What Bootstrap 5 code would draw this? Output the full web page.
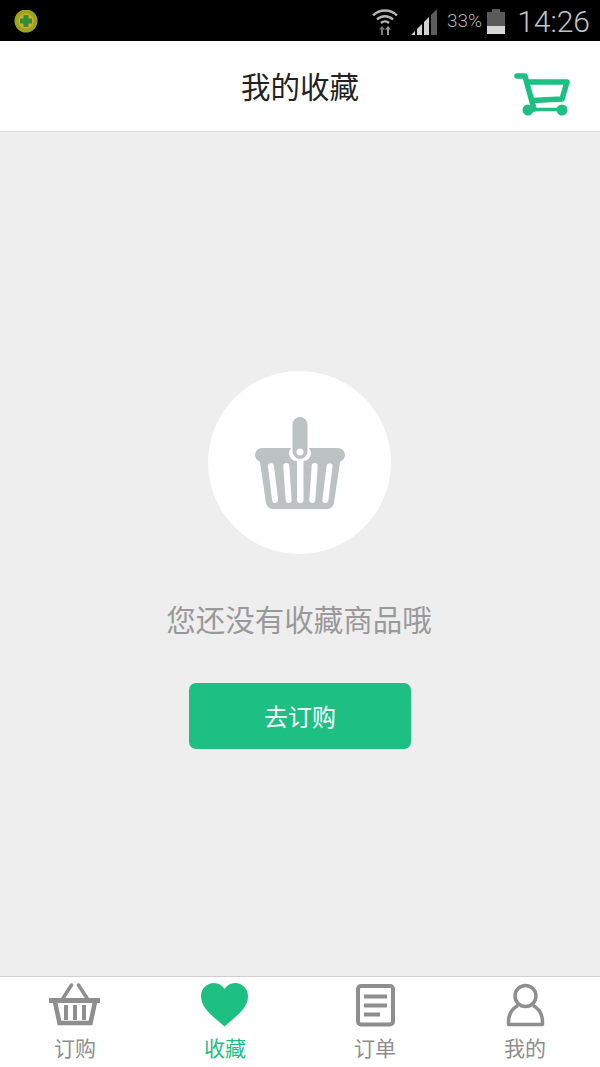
<!DOCTYPE html>
<html lang="zh-CN">
<head>
    <meta charset="UTF-8">
    <title>我的收藏</title>
    <meta name="viewport" content="width=device-width, initial-scale=1">
    <link href="https://cdn.jsdelivr.net/npm/bootstrap@5.3.0/dist/css/bootstrap.min.css" rel="stylesheet">
    <style>
        html, body {
            height: 100%;
        }
        body {
            font-family: "Noto Sans CJK SC", "Liberation Sans", sans-serif;
            background-color: #eeeeee;
        }
        .app-shell {
            height: 1067px;
        }
        /* Status bar */
        .status-strip {
            height: 41px;
            background-color: #000;
            color: #b5b5b5;
            font-family: Roboto, "Liberation Sans", sans-serif;
            padding: 2px 10px 0 14px;
        }
        .status-wifi {
            margin-right: 10px;
        }
        .status-percent {
            font-size: 19px;
            font-weight: 300;
            margin: 0 5px 0 0;
        }
        .status-clock {
            font-size: 30px;
            font-weight: 300;
            line-height: 1;
            margin-left: 12px;
            color: #c4c4c4;
        }
        /* Header */
        .top-title {
            height: 91px;
            background-color: #fff;
            border-bottom: 1px solid #dedede;
        }
        .top-title h1 {
            font-size: 29.500px;
            font-weight: 400;
            color: #222;
            margin: 0;
        }
        .cart-link {
            position: absolute;
            left: 512px;
            top: 29px;
            line-height: 0;
        }
        /* Empty state */
        .empty-area {
            padding-top: 239px;
            background-color: #eeeeee;
        }
        .empty-circle {
            width: 183px;
            height: 183px;
            background-color: #fff;
            margin-left: -1px;
        }
        .empty-text {
            font-size: 29.500px;
            line-height: 40px;
            color: #999;
            margin: 44px 0 45px -2px;
        }
        .btn-order {
            width: 222px;
            height: 66px;
            font-size: 24px;
            line-height: 1;
            color: #fff;
            background-color: #1dbf83;
            border: 0;
            border-radius: 7px;
        }
        .btn-order:hover {
            color: #fff;
            background-color: #1aad77;
        }
        /* Tab bar */
        .tab-strip {
            height: 91px;
            background-color: #fff;
            border-top: 1px solid #cfcfcf;
        }
        .tab-entry {
            color: #8e8e8e;
            text-decoration: none;
            font-size: 21px;
            line-height: 26px;
            padding-top: 6px;
        }
        .tab-entry svg {
            display: block;
            margin-bottom: 7px;
        }
        .tab-entry.is-active {
            color: #1dbf83;
        }
    </style>
</head>
<body>
    <div class="app-shell d-flex flex-column">
        <!-- Status bar -->
        <div class="status-strip d-flex align-items-center">
            <svg width="24" height="24" viewBox="0 0 24 24">
                <circle cx="12" cy="11" r="11.500" fill="#9aa51f"/>
                <circle cx="12" cy="11" r="7.500" fill="#d9a92c"/>
                <path d="M9.500 5h5v3.500H18v5h-3.500V17h-5v-3.500H6v-5h3.500z" fill="#2f8f3a"/>
            </svg>
            <div class="ms-auto d-flex align-items-center">
                <svg width="32" height="30" viewBox="0 1 32 30" class="status-wifi">
                    <g fill="none" stroke="#b5b5b5" stroke-width="2.400">
                        <path d="M4 9.500a17 17 0 0 1 24 0"/>
                        <path d="M8 13.500a11.500 11.500 0 0 1 16 0"/>
                        <path d="M12 17a6 6 0 0 1 8 0"/>
                    </g>
                    <path d="M13 20l-3 3.500h2v5.500h2v-5.500h2z" fill="#777"/>
                    <path d="M19 20l-3 3.500h2v5.500h2v-5.500h2z" fill="#999"/>
                </svg>
                <svg width="28" height="28" viewBox="0 0 28 28">
                    <path d="M0 27l4-4v4z" fill="#d0d0d0"/>
                    <path d="M6 27v-6l5-5v11z" fill="#d0d0d0"/>
                    <path d="M13 27v-13l5-5v18z" fill="#d0d0d0"/>
                    <path d="M20 27v-20l6-6v26z" fill="#5c5c5c"/>
                </svg>
                <span class="status-percent ms-2">33%</span>
                <svg width="18" height="25" viewBox="0 0 18 25">
                    <path d="M5 0h8v3h5v22H0V3h5z" fill="#5a5a5a"/>
                    <rect x="0" y="17" width="18" height="8" fill="#d6d6d6"/>
                </svg>
                <span class="status-clock">14:26</span>
            </div>
        </div>

        <!-- Header -->
        <header class="top-title position-relative d-flex align-items-center justify-content-center">
            <h1>我的收藏</h1>
            <a href="#" class="cart-link" aria-label="购物车">
                <svg width="60" height="48" viewBox="512 70 60 48">
                    <g fill="none" stroke="#1dbf83" stroke-width="5.500" stroke-linecap="round" stroke-linejoin="round">
                        <path d="M517 76h8l9 33"/>
                        <path d="M528 82h39l-5 17-30 1.500"/>
                    </g>
                    <path d="M527 109.500h37" stroke="#1dbf83" stroke-width="3.500"/>
                    <circle cx="528" cy="110" r="5.500" fill="#1dbf83"/>
                    <circle cx="562" cy="110" r="5.500" fill="#1dbf83"/>
                </svg>
            </a>
        </header>

        <!-- Empty state -->
        <main class="empty-area flex-grow-1 d-flex flex-column align-items-center">
            <div class="empty-circle rounded-circle d-flex align-items-center justify-content-center">
                <svg width="92" height="94" viewBox="253 415 92 94">
                    <path d="M261 447h76a7 7 0 0 1 7 7c0 3-2 5-5 7l-6 41a7 7 0 0 1-7 6h-54a7 7 0 0 1-7-6l-6-41c-3-2-5-4-5-7a7 7 0 0 1 7-7z" fill="#bcc2c1"/>
                    <g fill="#fff">
                        <rect x="269" y="462" width="6" height="40" rx="3" transform="rotate(-7 272 482)"/>
                        <rect x="283.500" y="462" width="6" height="40" rx="3" transform="rotate(-4 286 482)"/>
                        <rect x="296" y="456" width="6.500" height="46" rx="3"/>
                        <rect x="309.500" y="462" width="6" height="40" rx="3" transform="rotate(4 312 482)"/>
                        <rect x="323.500" y="462" width="6" height="40" rx="3" transform="rotate(7 326 482)"/>
                        <rect x="288" y="445" width="22" height="15" rx="7.500"/>
                    </g>
                    <rect x="291.500" y="416" width="15" height="42" rx="7.500" fill="#bcc2c1"/>
                    <circle cx="299" cy="451" r="3.500" fill="#fff"/>
                </svg>
            </div>
            <p class="empty-text">您还没有收藏商品哦</p>
            <a href="#" class="btn btn-order d-flex align-items-center justify-content-center">去订购</a>
        </main>

        <!-- Tab bar -->
        <nav class="tab-strip row g-0">
            <a href="#" class="tab-entry col-3 d-flex flex-column align-items-center">
                <svg width="52" height="44" viewBox="49 984 52 44">
                    <g fill="none" stroke="#8e8e8e">
                        <path d="M62.500 1000l9-14M87.500 1000l-9-14" stroke-width="3.500" stroke-linecap="round"/>
                        <path d="M49 1001.500h51" stroke-width="5"/>
                        <path d="M55 1003l4.500 21h31l4.500-21" stroke-width="4.500"/>
                        <path d="M66 1006v15M75 1006v15M84 1006v15" stroke-width="4"/>
                    </g>
                </svg>
                <span>订购</span>
            </a>
            <a href="#" class="tab-entry is-active col-3 d-flex flex-column align-items-center">
                <svg width="48" height="44" viewBox="201 984 48 44">
                    <path d="M224.500 1027.500C214 1018 201 1010 201 997c0-7.500 6-13 13-13 4.500 0 8 2 10.500 6 2.500-4 6-6 10.500-6 7 0 13 5.500 13 13 0 13-13 21-23.500 30.500z" fill="#1dbf83"/>
                </svg>
                <span>收藏</span>
            </a>
            <a href="#" class="tab-entry col-3 d-flex flex-column align-items-center">
                <svg width="40" height="44" viewBox="355 984 40 44">
                    <rect x="358" y="987" width="35" height="38.500" rx="3" fill="none" stroke="#8e8e8e" stroke-width="4"/>
                    <path d="M364 997.500h23M364 1006.500h23M364 1015.500h16" stroke="#8e8e8e" stroke-width="4" fill="none"/>
                </svg>
                <span>订单</span>
            </a>
            <a href="#" class="tab-entry col-3 d-flex flex-column align-items-center">
                <svg width="40" height="44" viewBox="505 984 40 44">
                    <circle cx="525.500" cy="997" r="10.500" fill="none" stroke="#8e8e8e" stroke-width="3.500"/>
                    <path d="M518 1006.500c-6 3-10 9-9.500 19h34c.5-10-3.500-16-9.500-19" fill="none" stroke="#8e8e8e" stroke-width="3.500" stroke-linejoin="round"/>
                </svg>
                <span>我的</span>
            </a>
        </nav>
    </div>

    <script src="https://cdn.jsdelivr.net/npm/bootstrap@5.3.0/dist/js/bootstrap.bundle.min.js"></script>
</body>
</html>
